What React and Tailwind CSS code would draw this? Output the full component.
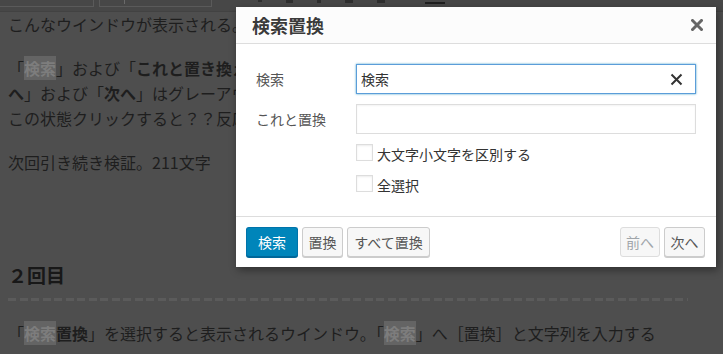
// App.jsx — 検索置換 dialog over a dimmed article page
const hl = "bg-[#646464] text-[#7d7d7d]";

function Toolbar() {
  return (
    <div className="h-[12px] bg-[#474747] border-b border-[#424242] flex items-start overflow-hidden">
      <div className="w-[94px] h-[8px] -mt-[1px] border border-[#5a5a5a] border-l-0" />
      <div className="relative w-[113px] h-[8px] -mt-[1px] ml-[5px] border border-[#5a5a5a]">
        <div className="absolute left-[24px] top-0 w-[1px] h-[4px] bg-[#6a6a6a]" />
      </div>
      <div className="flex items-start gap-[24px] ml-[46px]">
        <div className="w-[4px] h-[2px] bg-[#2e2e2e]" />
        <div className="w-[7px] h-[3px] bg-[#2e2e2e]" />
        <div className="w-[4px] h-[3px] bg-[#2e2e2e]" />
        <div className="w-[8px] h-[3px] bg-[#2e2e2e]" />
        <div className="w-[8px] h-[3px] bg-[#2e2e2e]" />
      </div>
      <div className="w-[20px] h-[2px] mt-[2px] ml-[40px] bg-[#1f1f1f]" />
    </div>
  );
}

function Btn({ children, className = "", disabled = false, primary = false }) {
  if (primary) {
    return (
      <button className={`h-[30px] rounded-[3px] bg-[#0085ba] border border-[#0073aa] border-b-[#006799] shadow-[0_1px_0_#006799] text-white text-[14px] ${className}`}>
        {children}
      </button>
    );
  }
  return (
    <button
      className={`h-[30px] rounded-[3px] bg-[#f7f7f7] border text-[14px] ${
        disabled
          ? "border-[#dddddd] text-[#a0a5aa]"
          : "border-[#cccccc] shadow-[0_1px_0_#cccccc] text-[#555555]"
      } ${className}`}
    >
      {children}
    </button>
  );
}

function Dialog() {
  return (
    <div className="absolute left-[236px] top-[7px] w-[480px] h-[260px] bg-white shadow-[2px_3px_8px_rgba(0,0,0,0.4)] flex flex-col">
      <div className="h-[37px] shrink-0 bg-[#fcfcfc] border-b border-[#dddddd] flex items-center justify-between pl-[16px] pr-[13px]">
        <span className="text-[18px] font-bold text-[#3a3a3a] leading-none">検索置換</span>
        <svg width="12" height="12" viewBox="0 0 12 12" className="mt-[-1px]">
          <path d="M1.5 1.5 L10.5 10.5 M10.5 1.5 L1.5 10.5" stroke="#666" strokeWidth="3" strokeLinecap="square" />
        </svg>
      </div>

      <div className="flex-1 px-[20px] pt-[20px]">
        <div className="flex items-center">
          <label className="w-[100px] text-[14px] text-[#555555] pl-[0px]">検索</label>
          <div className="w-[340px] h-[30px] border border-[#5b9dd9] shadow-[0_0_2px_rgba(30,140,190,0.8)] flex items-center justify-between pl-[4px] pr-[12px]">
            <span className="text-[14px] text-[#333333]">検索</span>
            <svg width="13" height="13" viewBox="0 0 13 13">
              <path d="M1.5 1.5 L11.5 11.5 M11.5 1.5 L1.5 11.5" stroke="#333" strokeWidth="2" />
            </svg>
          </div>
        </div>
        <div className="flex items-center mt-[10px]">
          <label className="w-[100px] text-[14px] text-[#555555]">これと置換</label>
          <div className="w-[340px] h-[30px] border border-[#dddddd] shadow-[inset_0_1px_2px_rgba(0,0,0,0.05)]" />
        </div>
        <div className="ml-[100px] mt-[3px]">
          <div className="h-[31px] flex items-center">
            <div className="w-[17px] h-[17px] border border-[#dddddd] shadow-[inset_0_1px_2px_rgba(0,0,0,0.08)]" />
            <span className="ml-[4px] mt-[4px] text-[14px] text-[#333333]">大文字小文字を区別する</span>
          </div>
          <div className="h-[31px] flex items-center">
            <div className="w-[17px] h-[17px] border border-[#dddddd] shadow-[inset_0_1px_2px_rgba(0,0,0,0.08)]" />
            <span className="ml-[4px] mt-[3px] text-[14px] text-[#333333]">全選択</span>
          </div>
        </div>
      </div>

      <div className="h-[51px] shrink-0 border-t border-[#dddddd] flex items-start justify-between pl-[10px] pr-[11px] pt-[10px]">
        <div className="flex gap-[4px]">
          <Btn primary className="w-[52px]">検索</Btn>
          <Btn className="w-[41px]">置換</Btn>
          <Btn className="w-[83px]">すべて置換</Btn>
        </div>
        <div className="flex gap-[4px]">
          <Btn disabled className="w-[40px]">前へ</Btn>
          <Btn className="w-[41px]">次へ</Btn>
        </div>
      </div>
    </div>
  );
}

export default function App() {
  return (
    <div className="relative w-[723px] h-[354px] overflow-hidden bg-[#4e4e4e] font-['Noto_Sans_CJK_JP','Noto_Sans',sans-serif] text-[#1e1e1e]">
      <Toolbar />
      <div className="pl-[8px] text-[16px] leading-[25px] whitespace-nowrap">
        <p>こんなウインドウが表示される。</p>
        <p className="mt-[19px]">
          「<span className={hl + " font-bold"}>検索</span>」および「<b>これと置き換え</b>」は入力できる状態で、「<b>置換</b>」、「<b>すべて置換</b>」、「<b>前</b>
          <br />
          <b>へ</b>」および「<b>次へ</b>」はグレーアウトされている。
          <br />
          この状態クリックすると？？反応しない。
        </p>
        <p className="mt-[19px]">次回引き続き検証。211文字</p>
        <h2 className="mt-[86px] text-[19px] font-bold leading-[28px] text-[#181818]">２回目</h2>
        <div className="mt-[9px] w-[680px] h-[3px] bg-[repeating-linear-gradient(90deg,#5b5b5b_0_8px,transparent_8px_11.5px)]" />
        <p className="mt-[20px]">
          「<span className={hl + " font-bold"}>検索</span><b>置換</b>」を選択すると表示されるウインドウ。「<span className={hl + " font-bold"}>検索</span>」へ［置換］と文字列を入力する
        </p>
      </div>
      <Dialog />
    </div>
  );
}
